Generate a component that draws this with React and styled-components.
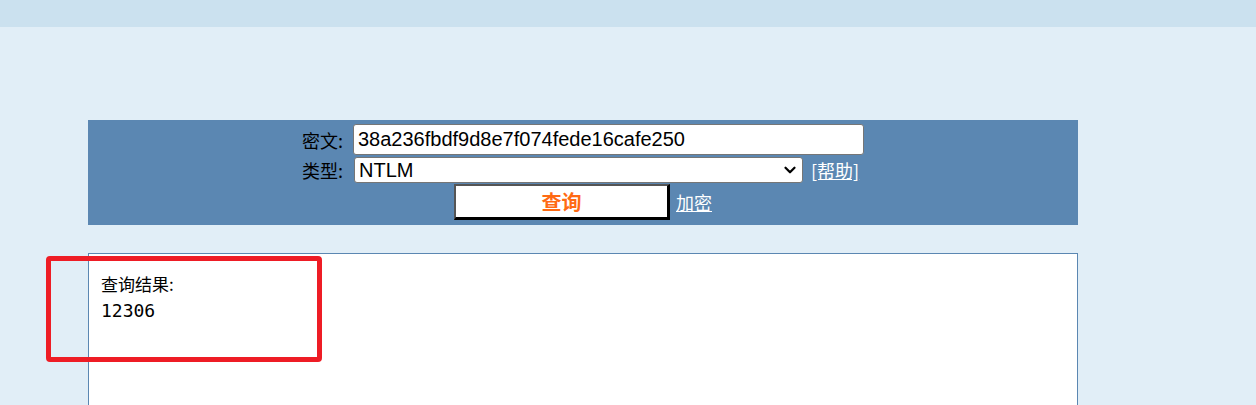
import styled, { createGlobalStyle } from "styled-components";
import { ChevronDown } from "lucide-react";

const GlobalStyle = createGlobalStyle`
  html, body {
    margin: 0;
    padding: 0;
    background: #e1eef7;
    font-family: "Noto Sans CJK SC", "Liberation Sans", sans-serif;
  }
`;

const TopBar = styled.div`
  height: 27px;
  background: #cbe1ef;
`;

const Page = styled.div`
  height: 378px;
  padding: 93px 0 0 88px;
  box-sizing: border-box;
  overflow: hidden;
`;

const Wrap = styled.div`
  width: 990px;
`;

const Panel = styled.form`
  display: flex;
  flex-direction: column;
  align-items: center;
  height: 105px;
  box-sizing: border-box;
  padding-top: 4px;
  background: #5b87b2;
`;

const Fields = styled.div`
  display: flex;
  flex-direction: column;
  align-items: flex-start;
`;

const Row = styled.div`
  display: flex;
  align-items: center;
  height: ${(p) => p.h}px;
  margin-bottom: ${(p) => p.mb || 0}px;
  margin-left: ${(p) => p.ml || 0}px;
`;

const Label = styled.span`
  font-family: "Noto Sans CJK SC", sans-serif;
  font-size: 18px;
  color: #000;
  width: 51px;
  white-space: nowrap;
`;

const TextInput = styled.input`
  width: 511px;
  height: 31px;
  box-sizing: border-box;
  border: 1px solid #767676;
  border-radius: 3px;
  padding: 0 4px;
  font-family: "Liberation Sans", Arial, sans-serif;
  font-size: 20px;
  color: #000;
  background: #fff;
  outline: none;
`;

const SelectWrap = styled.div`
  position: relative;
  width: 449px;
  height: 26px;
  margin-left: 1px;
`;

const Select = styled.select`
  appearance: none;
  width: 100%;
  height: 100%;
  box-sizing: border-box;
  border: 1px solid #767676;
  border-radius: 3px;
  font-family: "Liberation Sans", Arial, sans-serif;
  font-size: 20px;
  color: #000;
  background: #fff;
  padding: 0 4px;
  outline: none;
`;

const Arrow = styled.span`
  position: absolute;
  right: 4px;
  top: 4px;
  display: flex;
  pointer-events: none;
  color: #000;
`;

const Link = styled.a`
  font-family: "Noto Sans CJK SC", sans-serif;
  font-size: 18px;
  color: #fff;
  text-decoration: underline;
  margin-left: ${(p) => p.ml}px;
  cursor: pointer;
`;

const QueryButton = styled.button`
  width: 216px;
  height: 36px;
  box-sizing: border-box;
  background: #fff;
  border-top: 2px solid #555;
  border-left: 2px solid #555;
  border-right: 3px solid #000;
  border-bottom: 3px solid #000;
  font-family: "Noto Sans CJK SC", sans-serif;
  font-size: 20px;
  font-weight: bold;
  color: #ff6a13;
  padding: 0;
  cursor: pointer;
`;

const ResultBox = styled.div`
  position: relative;
  margin-top: 28px;
  height: 160px;
  background: #fff;
  border: 1px solid #5b87b2;
  padding: 18px 12px;
  box-sizing: border-box;
`;

const ResultTitle = styled.div`
  font-family: "Noto Sans CJK SC", sans-serif;
  font-size: 17px;
  line-height: 24px;
  color: #000;
`;

const ResultValue = styled.div`
  font-family: "DejaVu Sans Mono", "Liberation Mono", monospace;
  font-size: 18px;
  line-height: 30px;
  color: #000;
`;

const Highlight = styled.div`
  position: absolute;
  left: -43px;
  top: 2px;
  width: 276px;
  height: 106px;
  box-sizing: border-box;
  border: 5px solid #ee1c25;
  border-radius: 4px;
  pointer-events: none;
`;

export default function App() {
  return (
    <>
      <GlobalStyle />
      <TopBar />
      <Page>
        <Wrap>
          <Panel onSubmit={(e) => e.preventDefault()}>
            <Fields>
              <Row h={31} mb={2}>
                <Label>密文:</Label>
                <TextInput defaultValue="38a236fbdf9d8e7f074fede16cafe250" />
              </Row>
              <Row h={26} mb={1}>
                <Label>类型:</Label>
                <SelectWrap>
                  <Select defaultValue="NTLM">
                    <option>MD5</option>
                    <option>NTLM</option>
                    <option>SHA1</option>
                  </Select>
                  <Arrow>
                    <ChevronDown size={18} strokeWidth={3} />
                  </Arrow>
                </SelectWrap>
                <Link ml={8}>[帮助]</Link>
              </Row>
              <Row h={36} ml={152}>
                <QueryButton type="submit">查询</QueryButton>
                <Link ml={6}>加密</Link>
              </Row>
            </Fields>
          </Panel>
          <ResultBox>
            <ResultTitle>查询结果:</ResultTitle>
            <ResultValue>12306</ResultValue>
            <Highlight />
          </ResultBox>
        </Wrap>
      </Page>
    </>
  );
}
